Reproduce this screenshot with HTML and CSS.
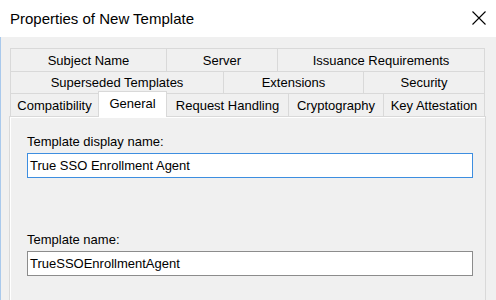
FILE: index.html
```html
<!DOCTYPE html>
<html>
<head>
  <meta charset="utf-8">
  <title>Properties of New Template</title>
  <link rel="stylesheet" href="styles.css">
</head>
<body>
  <div class="window">
    <div class="titlebar">
      <span class="title">Properties of New Template</span>
      <svg class="close" width="14" height="14" viewBox="0 0 14 14">
        <path d="M0.5 0.5 L13.5 13.5 M13.5 0.5 L0.5 13.5" stroke="#000" stroke-width="1.1" fill="none"/>
      </svg>
    </div>
    <div class="content">
      <div class="tabs">
        <div class="tab-row">
          <div class="tab tab-subject">Subject Name</div>
          <div class="tab tab-server">Server</div>
          <div class="tab tab-issuance">Issuance Requirements</div>
        </div>
        <div class="tab-row row-mid">
          <div class="tab tab-superseded">Superseded Templates</div>
          <div class="tab tab-extensions">Extensions</div>
          <div class="tab tab-security">Security</div>
        </div>
        <div class="tab-row">
          <div class="tab tab-compat">Compatibility</div>
          <div class="tab tab-general selected">General</div>
          <div class="tab tab-request">Request Handling</div>
          <div class="tab tab-crypto">Cryptography</div>
          <div class="tab tab-key">Key Attestation</div>
        </div>
      </div>
      <div class="page">
        <div class="field-label">Template display name:</div>
        <div class="textbox focused">True SSO Enrollment Agent</div>
        <div class="field-label second">Template name:</div>
        <div class="textbox">TrueSSOEnrollmentAgent</div>
      </div>
    </div>
  </div>
</body>
</html>
```

FILE: styles.css
```css
html, body {
  margin: 0;
  padding: 0;
  width: 100%;
  height: 100%;
  overflow: hidden;
  font-family: "Liberation Sans", Arial, sans-serif;
  color: #000;
}
.window {
  width: 496px;
  height: 300px;
  display: flex;
  flex-direction: column;
  background: #fff;
}
.titlebar {
  height: 37px;
  flex: none;
  display: flex;
  align-items: center;
  justify-content: space-between;
  padding: 0 10px 0 10px;
  box-sizing: border-box;
  background: #fff;
}
.title {
  font-size: 15px;
  margin-top: -1px;
}
.close {
  margin-top: -2px;
}
.content {
  flex: 1;
  display: flex;
  flex-direction: column;
  background: #f0f0f0;
  border-left: 1px solid #a9c9ec;
  padding: 11px 10px 0 8px;
  min-height: 0;
}
.tabs {
  margin: 0 1px 0 1px;
}
.tab-row {
  display: flex;
  height: 23px;
}
.tab-row.row-mid {
  height: 22px;
}
.tab {
  box-sizing: border-box;
  border-top: 1px solid #d9d9d9;
  border-left: 1px solid #d9d9d9;
  font-size: 13px;
  display: flex;
  align-items: center;
  justify-content: center;
  white-space: nowrap;
  background: #f0f0f0;
}
.tab:last-child {
  border-right: 1px solid #d9d9d9;
}
.tab-subject { width: 156px; }
.tab-server { width: 111px; }
.tab-issuance { width: 208px; }
.tab-superseded { width: 213px; }
.tab-extensions { width: 140px; }
.tab-security { width: 122px; }
.tab-compat { width: 88px; }
.tab-general { width: 69px; }
.tab-request { width: 121px; }
.tab-crypto { width: 95px; }
.tab-key { width: 102px; }

.tab.selected {
  position: relative;
  z-index: 1;
  background: #fff;
  border-right: 1px solid #d9d9d9;
  height: 26px;
  margin-top: -2px;
  padding-bottom: 3px;
}
.tab.selected + .tab {
  border-left: none;
}
.page {
  flex: 1;
  border: 1px solid #d9d9d9;
  border-bottom: none;
  box-shadow: inset 1px 1px 0 #fff;
  padding: 17px 12px 0 17px;
}
.field-label {
  font-size: 13px;
  line-height: 15px;
}
.field-label.second {
  margin-top: 54px;
}
.textbox {
  margin-top: 4px;
  height: 25px;
  box-sizing: border-box;
  border: 1px solid #8c8c8c;
  background: #fff;
  font-size: 13px;
  display: flex;
  align-items: center;
  padding-left: 2px;
}
.textbox.focused {
  border-color: #3d8ee0;
}
```
